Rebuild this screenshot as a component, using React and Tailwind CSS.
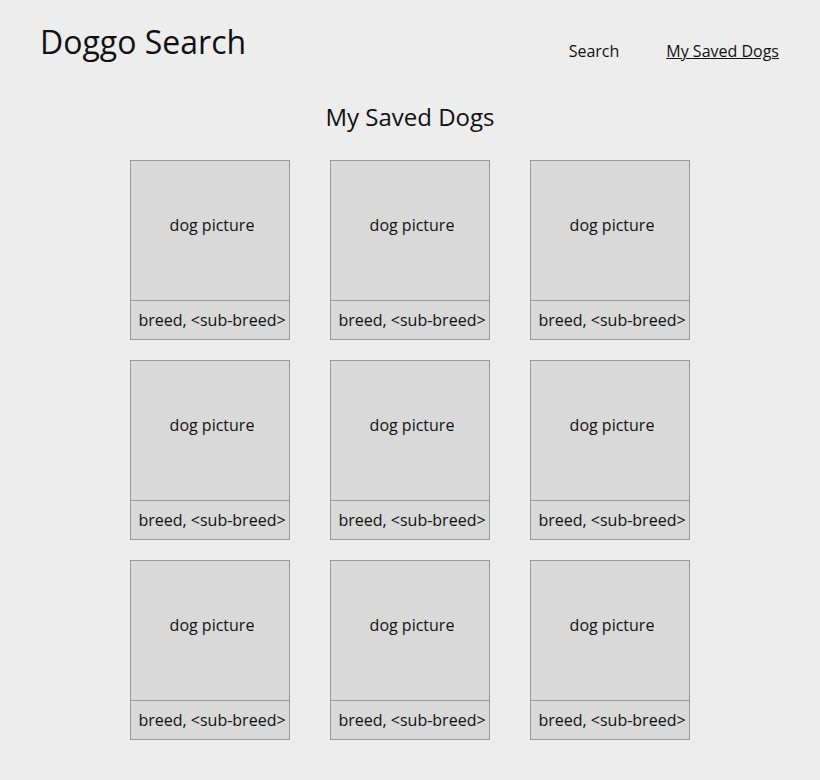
export default function App() {
  const items = Array.from({ length: 9 });
  return (
    <div className="min-h-[780px] w-full bg-[#ededed] text-[#111] font-['Open_Sans',sans-serif]">
      <header className="flex items-start justify-between pl-[40px] pr-[41px] pt-[20px]">
        <h1 className="text-[32px] leading-[44px]">Doggo Search</h1>
        <nav className="flex gap-[47px] pt-[19px] text-[16px] leading-[24px]">
          <span>Search</span>
          <span className="underline">My Saved Dogs</span>
        </nav>
      </header>
      <h2 className="mt-[37px] text-center text-[24px] leading-[32px]">My Saved Dogs</h2>
      <div className="mx-auto mt-[27px] grid w-[560px] grid-cols-[160px_160px_160px] gap-x-[40px] gap-y-[20px]">
        {items.map((_, i) => (
          <div key={i} className="flex h-[180px] flex-col border border-[#9a9a9a] bg-[#d9d9d9]">
            <div className="flex h-[139px] items-start justify-center pl-[4px] pt-[52px] text-[16px] leading-[24px]">
              dog picture
            </div>
            <div className="flex flex-1 items-center justify-center border-t border-[#9a9a9a] pl-[4px] text-[16px] leading-[24px]">
              breed, &lt;sub-breed&gt;
            </div>
          </div>
        ))}
      </div>
    </div>
  );
}
